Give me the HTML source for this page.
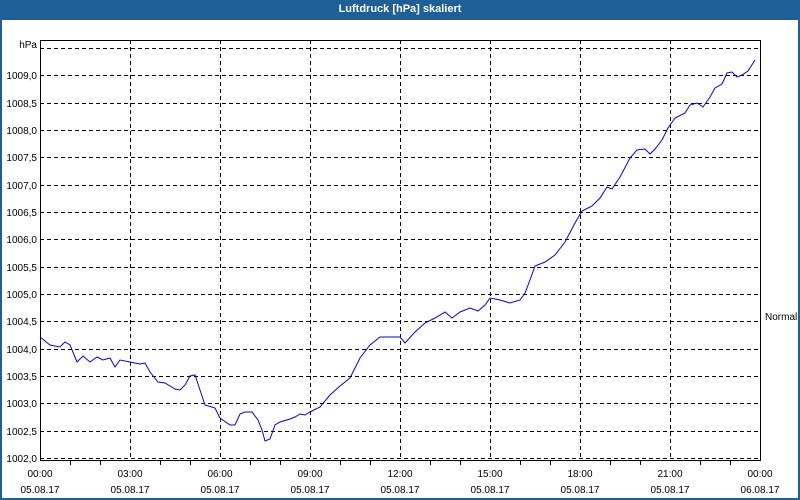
<!DOCTYPE html><html><head><style>
body{margin:0;width:800px;height:500px;overflow:hidden;background:#fff;font-family:"Liberation Sans",sans-serif;}
.t{position:absolute;left:0;top:0;width:800px;height:20px;background:#1d5f98;color:#fff;font-weight:bold;font-size:11px;text-align:center;line-height:19px}
.f{position:absolute;left:0;top:20px;width:796px;height:478px;border:2px solid #1d5f98;border-top:0}
</style></head><body>
<div class="t">Luftdruck [hPa] skaliert</div><div class="f"></div>
<svg style="position:absolute;left:0;top:0" width="800" height="500" font-family="Liberation Sans,sans-serif" font-size="10">
<g stroke="#000" stroke-dasharray="4,3" stroke-width="1">
<line x1="40" x2="760" y1="48.5" y2="48.5"/><line x1="40" x2="760" y1="75.5" y2="75.5"/><line x1="40" x2="760" y1="103.5" y2="103.5"/><line x1="40" x2="760" y1="130.5" y2="130.5"/><line x1="40" x2="760" y1="157.5" y2="157.5"/><line x1="40" x2="760" y1="185.5" y2="185.5"/><line x1="40" x2="760" y1="212.5" y2="212.5"/><line x1="40" x2="760" y1="239.5" y2="239.5"/><line x1="40" x2="760" y1="267.5" y2="267.5"/><line x1="40" x2="760" y1="294.5" y2="294.5"/><line x1="40" x2="760" y1="321.5" y2="321.5"/><line x1="40" x2="760" y1="349.5" y2="349.5"/><line x1="40" x2="760" y1="376.5" y2="376.5"/><line x1="40" x2="760" y1="403.5" y2="403.5"/><line x1="40" x2="760" y1="431.5" y2="431.5"/><line x1="40" x2="760" y1="458.5" y2="458.5"/>
<line y1="40" y2="461" x1="130.5" x2="130.5"/><line y1="40" y2="461" x1="220.5" x2="220.5"/><line y1="40" y2="461" x1="310.5" x2="310.5"/><line y1="40" y2="461" x1="400.5" x2="400.5"/><line y1="40" y2="461" x1="490.5" x2="490.5"/><line y1="40" y2="461" x1="580.5" x2="580.5"/><line y1="40" y2="461" x1="670.5" x2="670.5"/></g>
<rect x="40.5" y="40.5" width="720" height="420" fill="none" stroke="#000"/>
<g stroke="#000"><line x1="70.5" x2="70.5" y1="461" y2="465"/><line x1="100.5" x2="100.5" y1="461" y2="465"/><line x1="160.5" x2="160.5" y1="461" y2="465"/><line x1="190.5" x2="190.5" y1="461" y2="465"/><line x1="250.5" x2="250.5" y1="461" y2="465"/><line x1="280.5" x2="280.5" y1="461" y2="465"/><line x1="340.5" x2="340.5" y1="461" y2="465"/><line x1="370.5" x2="370.5" y1="461" y2="465"/><line x1="430.5" x2="430.5" y1="461" y2="465"/><line x1="460.5" x2="460.5" y1="461" y2="465"/><line x1="520.5" x2="520.5" y1="461" y2="465"/><line x1="550.5" x2="550.5" y1="461" y2="465"/><line x1="610.5" x2="610.5" y1="461" y2="465"/><line x1="640.5" x2="640.5" y1="461" y2="465"/><line x1="700.5" x2="700.5" y1="461" y2="465"/><line x1="730.5" x2="730.5" y1="461" y2="465"/></g>
<polyline fill="none" stroke="#0000ee" stroke-width="1" points="40,337 50,345 60,347 65,342 70,345 77,362 83,356 90,362 97,357 103,360 110,358 115,367 120,360 130,362 140,364 145,363 150,372 158,382 165,383 170,386 175,389 180,390 185,385 190,376 195,375 200,390 205,405 215,408 220,418 230,425 235,425 240,414 245,412 252,412 258,420 262,430 265,441 270,439 275,425 280,422 290,419 295,417 300,414 305,415 310,412 320,407 330,395 340,386 350,378 360,358 370,345 380,337 390,337 400,337 405,343 415,332 425,323 435,318 445,312 452,318 460,312 470,308 478,311 485,305 490,298 500,300 510,303 520,300 525,293 530,280 535,266 545,262 555,255 565,242 575,223 582,211 592,206 600,198 607,187 612,189 620,177 630,158 637,150 645,149 650,154 655,149 662,140 668,128 675,118 685,113 690,105 697,103 703,107 710,97 715,88 722,84 727,73 732,72 737,77 742,75 748,71 755,60"/>
<g text-anchor="end"><text x="37" y="48">hPa</text><text x="37" y="79">1009,0</text><text x="37" y="107">1008,5</text><text x="37" y="134">1008,0</text><text x="37" y="161">1007,5</text><text x="37" y="189">1007,0</text><text x="37" y="216">1006,5</text><text x="37" y="243">1006,0</text><text x="37" y="271">1005,5</text><text x="37" y="298">1005,0</text><text x="37" y="325">1004,5</text><text x="37" y="353">1004,0</text><text x="37" y="380">1003,5</text><text x="37" y="407">1003,0</text><text x="37" y="435">1002,5</text><text x="37" y="462">1002,0</text></g>
<text x="765" y="320">Normal</text>
<g text-anchor="middle"><text x="40" y="477">00:00</text><text x="40" y="493">05.08.17</text><text x="130" y="477">03:00</text><text x="130" y="493">05.08.17</text><text x="220" y="477">06:00</text><text x="220" y="493">05.08.17</text><text x="310" y="477">09:00</text><text x="310" y="493">05.08.17</text><text x="400" y="477">12:00</text><text x="400" y="493">05.08.17</text><text x="490" y="477">15:00</text><text x="490" y="493">05.08.17</text><text x="580" y="477">18:00</text><text x="580" y="493">05.08.17</text><text x="670" y="477">21:00</text><text x="670" y="493">05.08.17</text><text x="760" y="477">00:00</text><text x="760" y="493">06.08.17</text></g>
</svg></body></html>
